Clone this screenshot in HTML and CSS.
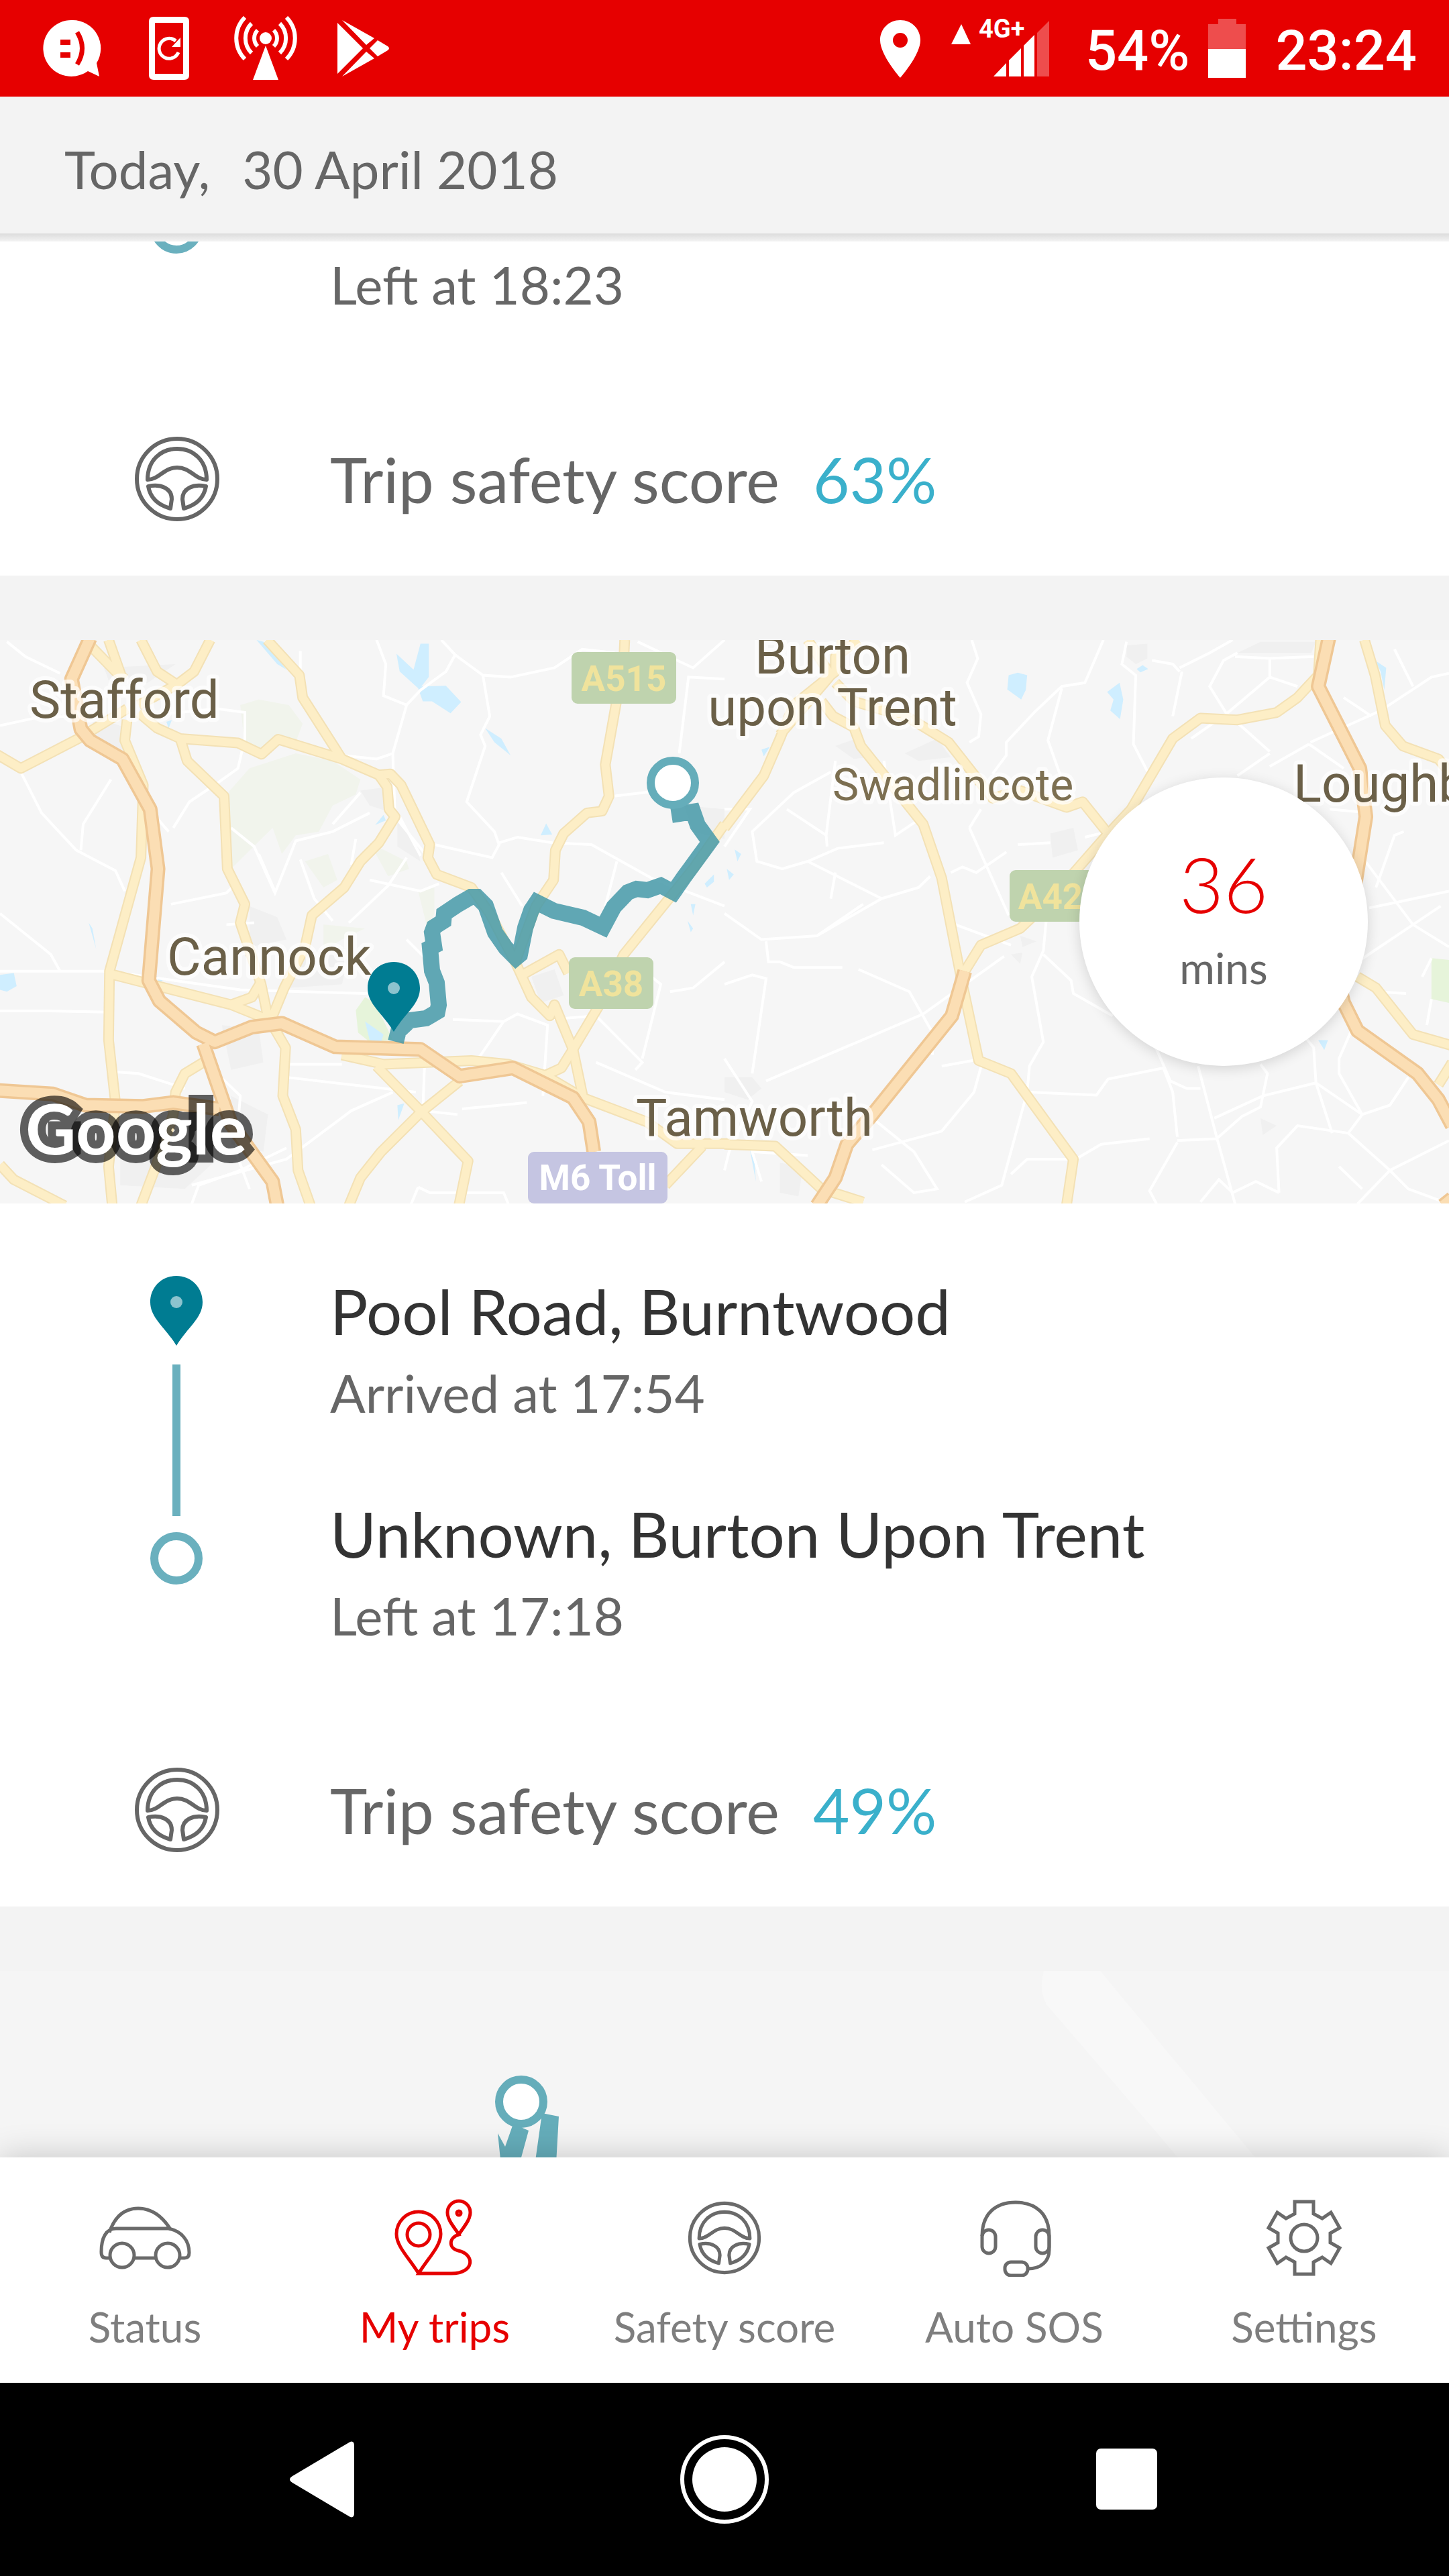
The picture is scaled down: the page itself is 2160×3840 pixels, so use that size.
FILE: index.html
```html
<!DOCTYPE html>
<html lang="en">

<head>
    <meta charset="UTF-8">
    <meta name="viewport" content="width=device-width, initial-scale=1.0">
    <title>My trips</title>
    <link rel="stylesheet" href="styles.css">
</head>

<body>
    <!-- shared icons -->
    <svg class="sprite" aria-hidden="true">
        <symbol id="wheel" viewBox="0 0 128 128">
            <g fill="none" stroke="currentColor" stroke-width="6" stroke-linejoin="round">
                <circle cx="64" cy="64" r="60" />
                <path d="M20 65C20 36 40 19 64 19S108 36 108 65C91 65 84 47 64 47S37 65 20 65Z" />
                <path d="M21 75C40 71 56 78 56 94L54 108C36 103 24 92 21 75Z" />
                <path d="M107 75C88 71 72 78 72 94L74 108C92 103 104 92 107 75Z" />
            </g>
        </symbol>
        <symbol id="pin" viewBox="0 0 78 104">
            <path fill="#007c92" d="M39 0C17 0 0 17 0 39C0 63 22 76 39 104C56 76 78 63 78 39C78 17 61 0 39 0Z" />
            <circle fill="#8cc3ce" cx="39" cy="39" r="9" />
        </symbol>
    </svg>

    <div class="status-bar">
        <div class="status-left">
            <svg class="status-icon" viewBox="0 0 96 96">
                <path fill="#fff" d="M48 6a42 42 0 1 0 23 76l17 8l-4-20A42 42 0 0 0 48 6Z" />
                <path fill="#e60000" d="M30 35h15v8H30zM30 54h15v8H30z" />
                <path fill="none" stroke="#e60000" stroke-width="7" d="M55 24Q70 48 55 72" />
            </svg>
            <svg class="status-icon" viewBox="0 0 96 96">
                <path fill="#fff" fill-rule="evenodd" d="M25 1H71Q78 1 78 8V88Q78 95 71 95H25Q18 95 18 88V8Q18 1 25 1ZM27 10V86H69V10Z" />
                <path fill="none" stroke="#fff" stroke-width="5" d="M62 54A15 15 0 1 1 58 37" />
                <path fill="#fff" d="M65 32V46H52Z" />
            </svg>
            <svg class="status-icon" viewBox="0 0 96 96">
                <g fill="none" stroke="#fff" stroke-width="6">
                    <path d="M17 2A44 44 0 0 0 17 64M79 2A44 44 0 0 1 79 64" />
                    <path d="M27 11A31 31 0 0 0 27 55M69 11A31 31 0 0 1 69 55" />
                    <path d="M36 21A17 17 0 0 0 36 45M60 21A17 17 0 0 1 60 45" />
                </g>
                <circle fill="#fff" cx="48" cy="33" r="9" />
                <path fill="#fff" d="M48 44L67 95H29Z" />
            </svg>
            <svg class="status-icon" viewBox="0 0 96 96">
                <path fill="#fff" d="M11 10L49 48L11 86ZM18 6L66 33L54 43ZM18 90L66 63L54 53ZM59 48L71 36L86 45Q90 48 86 51L71 60Z" />
            </svg>
        </div>
        <div class="status-right">
            <svg class="status-place" viewBox="0 0 60 96">
                <path fill="#fff" fill-rule="evenodd" d="M30 6C13 6 0 19 0 36C0 58 30 92 30 92S60 58 60 36C60 19 47 6 30 6ZM30 25A11 11 0 1 1 30 47A11 11 0 1 1 30 25Z" />
            </svg>
            <svg class="status-signal" viewBox="0 0 150 96">
                <path fill="#fff" d="M17 12L31 42H2Z" />
                <text class="network" x="43" y="32">4G+</text>
                <path fill="#fff" d="M65 90L84 70V90ZM88 90V66L106 48V90ZM110 90V44L126 28V90Z" />
                <path fill="#ee4d4d" d="M130 90V25L148 7V90Z" />
            </svg>
            <div class="battery">
                <span class="status-text">54%</span>
                <svg class="battery-icon" viewBox="0 0 56 96">
                    <path fill="#ee4d4d" d="M0 49V12H15V4H42V12H56V49Z" />
                    <path fill="#fff" d="M0 49H56V92H0Z" />
                </svg>
            </div>
            <span class="status-text">23:24</span>
        </div>
    </div>

    <header class="date-header">
        <span>Today,</span>
        <span>30 April 2018</span>
    </header>

    <main class="feed">
        <section class="trip trip-first">
            <div class="journey">
                <div class="timeline">
                    <span class="ring"></span>
                </div>
                <div class="stops">
                    <p class="time">Left at 18:23</p>
                </div>
            </div>
            <div class="score">
                <svg class="score-icon"><use href="#wheel" /></svg>
                <p class="score-text">Trip safety score <span class="percent">63%</span></p>
            </div>
        </section>

        <section class="trip">
            <div class="map">
                <svg class="map-art" viewBox="0 0 2160 840" preserveAspectRatio="xMidYMid slice">
                    <defs>
                        <g id="a-roads">
                            <!-- west half -->
                            <g transform="matrix(.6888 0 0 .5549 0 -14)">
                                <path d="M-10 330L45 370L170 290L275 210M195 40L250 110L270 130M235 25L262 120M305 25L340 110L383 145L420 110L455 25M383 145L300 200M578 25L648 120L655 180L740 345" />
                                <path d="M300 220L340 262L390 290L515 302L566 332L602 292L740 345L820 388L845 385L868 415L930 575L926 610L945 655L1020 690L1060 760L1115 890L1150 985L1190 1035L1200 1005L1240 1125L1262 1255L1400 1320L1465 1378L1580 1378" />
                                <path d="M275 240L270 295L310 415L305 610L237 915L235 1100L250 1270L235 1440L243 1545M390 290L405 350L485 445L492 640L530 735L520 785L565 950L580 1040" />
                                <path d="M820 388L838 420L842 480L855 500L820 570L780 620L745 690L675 765L660 850L615 960L585 1050L618 1120L612 1250L640 1340L645 1450L672 1545M237 922L500 1005L580 1045M500 1005L545 985L562 950" />
                                <path d="M1352 25L1350 80L1310 360L1318 445L1303 485L1270 490L1220 545L1202 590L1198 670L1160 740L1115 890M1568 520L1500 640L1350 870L1300 1000L1240 1125L1215 1175L1180 1195L1100 1165L1020 1155L830 1165L740 1140M1130 925L1210 870L1230 920M1180 1195L1262 1255" />
                                <path d="M815 1170L910 1290L1013 1425L993 1545M995 1210L910 1295L825 1400L780 1470L755 1545M440 1160L400 1190L380 1240L375 1300L340 1430L305 1545M0 1435L30 1475L140 1545M1520 1385L1440 1490" />
                            </g>
                            <!-- east half -->
                            <g transform="matrix(.6888 0 0 .5549 1080 -14)">
                                <path d="M255 25L240 110L150 200L120 290L85 390L0 530M180 25L230 120L120 280M290 25L240 70L240 110M210 190L235 230L280 260L295 310L430 520L470 665L510 920L550 1155L620 1190L755 1420L740 1545" />
                                <path d="M240 140L280 190L400 235L485 300L580 450L640 430L740 475L775 460L830 545" />
                                <path d="M1290 25L1285 120L1240 180L1195 220L1110 240L1030 235L970 290L880 480L820 560L700 730L640 800L555 845L520 915" />
                                <path d="M1385 25L1408 120L1430 255L1468 310L1545 345L1575 390M1370 930L1410 960L1490 1085L1575 1115M1575 1160L1545 1220M0 1380L110 1385L210 1500L300 1535" />
                            </g>
                        </g>
                        <g id="motorways">
                            <path transform="matrix(.6888 0 0 .5549 0 -14)" d="M195 20L155 130L175 265L195 295L265 345L325 480L342 640L322 940L345 995L425 1080L465 1105L545 1065L610 1055L725 1118L910 1125L995 1197L1110 1175L1240 1255L1275 1320L1285 1400M-10 1235L115 1245L185 1275L310 1278L375 1268L475 1285M440 1110L500 1325L590 1480L600 1545" />
                            <path transform="matrix(.6888 0 0 .5549 1080 -14)" d="M520 915L492 1035L320 1300L265 1380L240 1470L200 1545M1308 20L1285 150L1375 370L1388 500L1365 680L1310 850L1340 1000L1370 1075L1500 1190L1545 1260L1575 1330M1555 1545L1575 1525" />
                        </g>
                    </defs>

                    <rect width="2160" height="840" fill="#f6f6f6" />

                    <!-- woods, parks, towns and water -->
                    <g transform="matrix(.6888 0 0 .5549 0 -14)">
                        <path fill="#f1f4ec" d="M520 200L560 185L625 200L655 250L640 300L600 285L566 340L530 310ZM540 370L640 330L720 350L780 400L770 440L720 470L690 540L640 550L610 600L590 530L500 640L490 440ZM660 620L710 600L730 670L700 690ZM800 570L880 620L885 640L840 660ZM700 790L790 800L740 830L700 860ZM905 700L940 690L940 760L925 800Z" />
                        <path fill="#f0f0f0" d="M200 230L270 260L265 330L200 290ZM225 100L380 90L320 140L240 150ZM540 740L600 770L620 830L540 850ZM630 870L760 850L740 950L620 960ZM480 1060L560 1070L570 1160L500 1180ZM260 1380L420 1330L470 1420L400 1500L260 1490ZM500 1250L580 1300L570 1400L500 1380ZM780 430L840 420L850 490L800 470ZM860 510L900 570L910 620L860 580ZM1150 930L1200 910L1220 980L1170 1000ZM1480 470L1568 480L1568 560L1500 540Z" />
                        <path fill="#e6f4da" d="M790 985L812 1000L850 1100L800 1105L775 1080L770 1020Z" />
                        <path fill="#cfeeff" d="M858 62L895 105L910 35L928 35L928 125L912 150L965 148L998 192L975 222L935 190L915 190L905 155L865 110ZM1050 262L1085 290L1105 335L1070 300ZM1182 518L1195 548L1170 550ZM830 495L835 510L812 522ZM0 925L30 920L36 955L15 970L0 965ZM192 785L200 800L208 855ZM790 1050L830 1085L825 1105L800 1100ZM555 25L570 30L620 105L600 90ZM360 245L372 240L365 262ZM335 925L352 940L345 945ZM860 1275L875 1270L862 1315ZM1495 735L1505 735L1500 765ZM1488 780L1500 800L1495 810ZM1525 680L1545 655L1545 675L1530 690Z" />
                    </g>
                    <g transform="matrix(.6888 0 0 .5549 1080 -14)">
                        <path fill="#f0f0f0" d="M870 40L915 35L915 75L890 90L870 70ZM240 310L285 290L310 340L280 345ZM390 330L460 290L490 340L420 350ZM705 545L755 530L765 590L710 610ZM1110 60L1160 30L1280 30L1270 60ZM0 1200L60 1200L80 1230L50 1260L0 1240ZM120 1430L170 1440L160 1520L120 1510ZM1160 1310L1195 1330L1165 1355ZM640 820L675 835L645 850ZM620 870L645 865L640 895Z" />
                        <path fill="#e6f4da" d="M1530 880L1568 885V1000L1530 990Z" />
                        <path fill="#cfeeff" d="M615 120L635 113L655 120L652 160L642 185L612 158ZM828 165L855 140L863 185L856 238L835 215L842 185ZM892 103L905 93L917 103L900 112ZM1408 80L1432 100L1428 160L1420 110ZM80 320L98 312L85 338ZM22 588L36 600L28 620ZM5 640L20 655L10 670ZM1285 1100L1306 1100L1298 1127ZM55 1395L65 1430L68 1480Z" />
                    </g>

                    <g class="lanes">
                        <g transform="matrix(.6888 0 0 .5549 0 -14)">
                            <path d="M15 30L55 70L130 115M0 255L75 235L150 230M45 380L90 490L165 590L250 645L270 700M175 590L180 520L240 400M330 490L365 540M300 230L470 210L530 220V290L515 370L470 410L410 460L375 530" />
                            <path d="M0 915H235L520 965L790 975L860 960M0 1022H105L235 1025M0 760L110 870L130 915M370 735L490 705L510 680M500 530L550 580L595 705L640 565L720 540L800 490M595 700L560 600M650 615L680 720L720 780M720 520L780 435M770 560L760 630M880 610L840 685L755 785M800 670L910 700L950 680M490 790L550 785" />
                            <path d="M815 25L835 90L830 175L880 200L850 330L855 500L930 615M880 200L910 160L965 110L985 65L955 25M985 65L1045 120L1105 125L1200 100L1260 50L1330 60M1045 120L1060 230L1040 280L1050 310L1010 460L1070 540L1080 575L1065 610L940 575M1080 570L1120 555L1195 570L1280 575L1410 665L1568 740M1335 620L1310 740M1470 330L1490 125L1568 130M1568 25L1500 100L1380 30M1325 445L1430 430" />
                            <path d="M740 335L815 345L850 330M650 55V120M865 500L910 605M880 830L920 880M1085 650L1130 740M980 1045L1090 1050L1120 1030L1185 1060L1175 1250M1090 1050L1035 1150M1185 1045L1290 1035L1390 1160L1375 1180M1400 920L1430 950L1410 1050L1390 1150M1568 890L1500 960L1450 970M1290 1160L1440 1240L1568 1260M625 1165H740M620 1200L900 1240M240 1185L300 1190L400 1230M1000 1285L1140 1268M850 1240L760 1290L620 1420L415 1490M920 1130L915 1290L990 1300M415 1540L430 1490L520 1450L620 1390M470 1190L520 1250L510 1400L540 1500M905 1495L930 1510H1090L1100 1540M905 1495L890 1540" />
                        </g>
                        <g transform="matrix(.6888 0 0 .5549 1080 -14)">
                            <path d="M535 25L548 75L525 140L555 225L550 285L530 300M820 25L780 140L730 150L670 220L610 300V335L580 385M730 155L700 295L730 400M870 30L860 90L890 120L885 305L920 390M925 80L970 90L985 110M1110 60L1080 80L1050 150L1085 220L1180 325M1105 70L1180 75L1275 70M1180 75V125L1240 150M1180 125L1085 225L1010 290M985 100L1050 60L1100 25M990 110L970 230M1180 330L1110 390M1265 305L1340 370M1265 305L1180 365M1268 300L1420 215L1530 125L1568 115M1450 50L1490 150M1340 180L1400 230M1310 480L1400 490" />
                            <path d="M0 480H55L0 580M230 380L150 435L60 540L70 620L125 640L180 620L245 585L345 570M135 480L220 550L222 580M345 350L370 550L430 500M220 550L240 350M180 620L340 720L200 820L80 830L0 760M340 720L420 690L445 660M200 820L300 735M240 650L230 720M530 530L555 480M530 530L615 765M490 650L515 635L545 650L610 595M635 575L705 570M780 555L830 540M0 950L60 925L90 935L60 1190M90 835L95 890L120 890L150 905H255M290 910L400 970L450 1080V1140M90 1210L430 1030L605 875M500 790L620 845" />
                            <path d="M700 730L690 860L665 930L690 1105L660 1170L655 1240L600 1490L520 1535M660 1240L805 1248L830 1205L950 1175L970 1240L980 1360M690 870L750 940L755 975L840 1035M470 1170L560 1150L540 1240L470 1345L320 1395M320 1310L410 1400L460 1500L410 1510L340 1435M930 1110L965 1210L1000 1230H1030M1025 1170L1065 1360L1105 1540M760 1420L815 1380L920 1365M620 1460L655 1420H750M980 1375L920 1505L935 1540M980 1370L1065 1365L1120 1305L1160 1280L1165 1250L1280 1215L1380 1300L1350 1350L1440 1450L1568 1370M1160 1165L1175 1190L1165 1250L1060 1310M1280 1215L1275 1120L1255 1090M1280 1215L1315 1350M1365 1050L1330 1150V1190L1380 1300L1440 1275L1480 1200M1350 1350L1240 1330L1195 1390L1200 1510M1440 1450L1370 1540M1200 1510L1150 1480L1100 1510L1070 1475L1030 1535M1440 1450L1480 1500L1568 1540M1380 1500L1330 1440" />
                            <path d="M1395 745L1455 730L1568 700M1375 600L1490 790L1568 850M1370 890L1490 790M1490 790L1550 740M1410 690L1450 550L1470 540M1410 970L1475 975M1530 990L1520 1060M1510 930L1530 880M0 1150L60 1265L10 1400L0 1450M80 1480L60 1400L180 1410" />
                        </g>
                    </g>

                    <use class="a-road-edge" href="#a-roads" />
                    <use class="a-road" href="#a-roads" />
                    <use class="motorway-edge" href="#motorways" />
                    <use class="motorway" href="#motorways" />

                    <g class="shield">
                        <rect x="852" y="18" width="156" height="77" rx="9" />
                        <rect x="848" y="473" width="126" height="77" rx="9" />
                        <rect x="1505" y="343" width="126" height="77" rx="9" />
                        <rect class="toll" x="787" y="763" width="208" height="77" rx="9" />
                        <text x="930" y="76">A515</text>
                        <text x="911" y="531">A38</text>
                        <text x="1566" y="401">A42</text>
                        <text class="toll-text" x="891" y="820">M6 Toll</text>
                    </g>

                    <path class="route" d="M590 599L594 583L611 567L635 564L652 554L654 544L651 511L644 493L641 459L647 456L644 436L647 428L661 419L662 408L683 394L702 383H711L724 396L738 436L754 459L769 474L775 469L783 429L792 403L800 391L826 404L869 414L899 428L915 398L936 376L949 371L965 373L985 366L1004 376L1020 353L1058 301L1040 276L1033 256L1001 261" />

                    <g class="town">
                        <text x="44" y="116">Stafford</text>
                        <text x="249" y="499">Cannock</text>
                        <text x="948" y="739">Tamworth</text>
                        <text x="1241" y="50" text-anchor="middle">Burton</text>
                        <text x="1241" y="127" text-anchor="middle">upon Trent</text>
                        <text x="1928" y="241">Loughb</text>
                        <text class="town-small" x="1241" y="239">Swadlincote</text>
                    </g>

                    <circle class="route-start" cx="1003" cy="213" r="33" />
                    <use href="#pin" x="548" y="480" width="78" height="104" />
                    <text class="google" x="38" y="767">Google</text>
                </svg>
                <div class="duration">
                    <span class="duration-value">36</span>
                    <span class="duration-unit">mins</span>
                </div>
            </div>

            <div class="journey">
                <div class="timeline">
                    <svg class="pin-icon"><use href="#pin" /></svg>
                    <span class="line"></span>
                    <span class="ring"></span>
                </div>
                <div class="stops">
                    <div>
                        <h2 class="place">Pool Road, Burntwood</h2>
                        <p class="time">Arrived at 17:54</p>
                    </div>
                    <div>
                        <h2 class="place">Unknown, Burton Upon Trent</h2>
                        <p class="time">Left at 17:18</p>
                    </div>
                </div>
            </div>
            <div class="score">
                <svg class="score-icon"><use href="#wheel" /></svg>
                <p class="score-text">Trip safety score <span class="percent">49%</span></p>
            </div>
        </section>

        <section class="trip">
            <div class="map">
                <svg class="map-art" viewBox="0 0 2160 840" preserveAspectRatio="xMidYMid slice">
                    <rect width="2160" height="840" fill="#f5f5f5" />
                    <path fill="#f8f8f8" d="M1556 0Q1548 28 1560 50L1756 278L2240 840H2350L1871 278L1640 0Z" />
                    <path fill="#65adba" d="M742 242L753 262L765 228L788 238L760 340H752ZM808 212L833 217L826 340H790Z" />
                    <circle class="route-start" cx="777" cy="195" r="33" />
                </svg>
            </div>
        </section>
    </main>

    <nav class="tabs">
        <a class="tab" href="#status">
            <svg class="tab-icon" viewBox="0 0 144 116">
                <path d="M20 88H14Q7 88 7 79C7 58 14 44 29 44H107C127 48 138 62 138 80Q138 88 131 88H125M57 88H88M19 50C27 26 42 14 62 14S98 26 110 45" />
                <circle cx="38" cy="84" r="18" />
                <circle cx="106" cy="84" r="18" />
            </svg>
            Status
        </a>
        <a class="tab active" href="#trips">
            <svg class="tab-icon" viewBox="0 0 144 116">
                <path d="M48 111C34 88 15 71 15 52A33 33 0 0 1 81 52C81 71 62 88 48 111H97C132 111 132 82 107 77C93 74 92 58 108 53C102 43 91 32 91 20A17 17 0 0 1 125 20C125 32 114 43 108 53" />
                <circle cx="48" cy="53" r="17" />
                <circle cx="108" cy="21" r="3" />
            </svg>
            My trips
        </a>
        <a class="tab" href="#safety">
            <svg class="tab-icon" viewBox="0 0 144 116"><use href="#wheel" x="17" y="3" width="110" height="110" /></svg>
            Safety score
        </a>
        <a class="tab" href="#sos">
            <svg class="tab-icon" viewBox="0 0 144 116">
                <path d="M24 55C24 22 44 5 74 5S124 22 124 55V76C124 93 112 104 92 104" />
                <rect x="24" y="46" width="20" height="35" rx="10" />
                <rect x="104" y="46" width="20" height="35" rx="10" />
                <rect x="58" y="94" width="34" height="20" rx="9" />
            </svg>
            Auto SOS
        </a>
        <a class="tab" href="#settings">
            <svg class="tab-icon" viewBox="0 0 144 116">
                <path d="M58 4H86V22L99 29L112 20L125 43L111 51V65L125 73L112 96L99 87L86 94V112H58V94L45 87L32 96L19 73L33 65V51L19 43L32 20L45 29L58 22Z" />
                <circle cx="72" cy="58" r="20" />
            </svg>
            Settings
        </a>
    </nav>

    <div class="system-bar">
        <button class="system-button" aria-label="Back">
            <svg width="132" height="132" viewBox="0 0 132 132">
                <path fill="#fff" d="M108 10Q114 8 114 16V116Q114 124 108 122L22 71Q14 66 22 61Z" />
            </svg>
        </button>
        <button class="system-button" aria-label="Home">
            <svg width="132" height="132" viewBox="0 0 132 132">
                <circle cx="66" cy="66" r="63" fill="none" stroke="#fff" stroke-width="6" />
                <circle cx="66" cy="66" r="48" fill="#fff" />
            </svg>
        </button>
        <button class="system-button" aria-label="Recent apps">
            <svg width="132" height="132" viewBox="0 0 132 132">
                <rect x="20" y="20" width="91" height="91" rx="7" fill="#fff" />
            </svg>
        </button>
    </div>
</body>

</html>
```
FILE: styles.css
```css
* {
    box-sizing: border-box;
}

body {
    margin: 0;
    height: 100vh;
    display: flex;
    flex-direction: column;
    background: #f3f3f3;
    color: #666;
    font-family: Lato, "Open Sans", sans-serif;
}

p,
h2 {
    margin: 0;
    font-weight: 400;
}

svg {
    display: block;
    flex: none;
}

.sprite {
    position: absolute;
    width: 0;
    height: 0;
}

/* status bar */
.status-bar {
    flex: none;
    display: flex;
    justify-content: space-between;
    align-items: center;
    height: 144px;
    padding: 0 48px 0 60px;
    background: #e60000;
    color: #fff;
    font-family: Roboto, sans-serif;
}

.status-left {
    display: flex;
    gap: 48px;
}

.status-icon {
    width: 96px;
    height: 96px;
}

.status-right {
    display: flex;
    align-items: center;
    gap: 44px;
}

.status-place {
    width: 60px;
    height: 96px;
}

.status-signal {
    width: 150px;
    height: 96px;
    margin-right: 8px;
    overflow: visible;
}

.network {
    fill: #fff;
    font-size: 38px;
    font-weight: 700;
}

.battery {
    display: flex;
    align-items: center;
    gap: 28px;
}

.battery-icon {
    width: 56px;
    height: 96px;
}

.status-text {
    padding-top: 8px;
    font-size: 83px;
    font-weight: 500;
    line-height: 96px;
}

/* date */
.date-header {
    flex: none;
    display: flex;
    gap: 48px;
    padding: 52px 96px 52px;
    background: linear-gradient(#dcdcdc, #f3f3f3) bottom / 100% 12px no-repeat #f3f3f3;
    font-size: 78px;
    line-height: 112px;
}

/* trips */
.feed {
    flex: 1;
    min-height: 0;
    overflow: hidden;
    display: flex;
    flex-direction: column;
    gap: 96px;
}

.trip {
    flex: none;
    background: #fff;
}

.journey {
    display: grid;
    grid-template-columns: 492px 1fr;
    padding-top: 94px;
}

.timeline {
    display: flex;
    flex-direction: column;
    align-items: center;
    width: 78px;
    margin: 14px 0 0 224px;
}

.trip-first .journey {
    height: 120px;
    padding-top: 8px;
}

/* the first trip is scrolled half under the date */
.trip-first .timeline {
    margin-top: -68px;
}

.pin-icon {
    width: 78px;
    height: 104px;
}

.line {
    width: 12px;
    height: 226px;
    margin: 28px 0 24px;
    background: #6ab0be;
}

.ring {
    width: 78px;
    height: 78px;
    border: 12px solid #6ab0be;
    border-radius: 50%;
}

.stops {
    display: flex;
    flex-direction: column;
    gap: 88px;
}

.place {
    color: #333;
    font-size: 94px;
    line-height: 132px;
}

.time {
    font-size: 78px;
    line-height: 112px;
}

.score {
    display: grid;
    grid-template-columns: 292px 1fr;
    align-items: center;
    padding: 168px 0 78px 200px;
}

.score-icon {
    width: 128px;
    height: 128px;
}

.score-text {
    font-size: 94px;
    line-height: 132px;
}

.percent {
    margin-left: 26px;
    color: #3ab0cb;
}

/* map */
.map {
    position: relative;
}

.map-art {
    width: 100%;
    height: 840px;
}

.map-art path {
    vector-effect: non-scaling-stroke;
}

.lanes {
    fill: none;
    stroke: #fff;
    stroke-width: 4px;
}

.a-road-edge,
.a-road,
.motorway-edge,
.motorway,
.route {
    fill: none;
    stroke-linejoin: round;
}

.a-road-edge {
    stroke: #f3e1b5;
    stroke-width: 16px;
}

.a-road {
    stroke: #fdeec6;
    stroke-width: 12px;
}

.motorway-edge {
    stroke: #efc794;
    stroke-width: 22px;
}

.motorway {
    stroke: #fbdeb4;
    stroke-width: 15px;
}

.route {
    stroke: #4599a8;
    stroke-opacity: .85;
    stroke-width: 24px;
    stroke-linejoin: miter;
}

.route-start {
    fill: #fff;
    stroke: #65adba;
    stroke-width: 12px;
}

.shield {
    fill: #bfd3ae;
    font-family: Roboto, sans-serif;
    font-size: 53px;
    font-weight: 700;
    text-anchor: middle;
}

.shield text {
    fill: #f0e39c;
}

.shield .toll {
    fill: #c5c5e2;
}

.shield .toll-text {
    fill: #fff;
}

.town {
    fill: #6b6048;
    stroke: rgba(255, 255, 255, .7);
    stroke-width: 12px;
    stroke-linejoin: round;
    paint-order: stroke;
    font-family: Roboto, sans-serif;
    font-size: 78px;
}

.town-small {
    fill: #7c6f51;
    font-size: 66px;
}

.google {
    fill: #fff;
    stroke: rgba(0, 0, 0, .62);
    stroke-width: 24px;
    paint-order: stroke;
    font-size: 104px;
    font-weight: 700;
}

.duration {
    position: absolute;
    top: 205px;
    right: 121px;
    display: flex;
    flex-direction: column;
    align-items: center;
    gap: 20px;
    width: 430px;
    height: 430px;
    padding-top: 92px;
    border-radius: 50%;
    background: #fff;
    box-shadow: 0 4px 20px rgba(0, 0, 0, .14);
}

.duration-value {
    color: #e60000;
    font-size: 114px;
    font-weight: 300;
    line-height: 132px;
}

.duration-unit {
    font-size: 64px;
    line-height: 80px;
}

/* bottom tabs */
.tabs {
    flex: none;
    position: relative;
    display: grid;
    grid-template-columns: repeat(5, 1fr);
    padding: 62px 0 44px;
    background: #fff;
    box-shadow: 0 0 48px rgba(0, 0, 0, .2);
}

.tab {
    display: flex;
    flex-direction: column;
    align-items: center;
    gap: 34px;
    color: #7e7e7e;
    font-size: 62px;
    line-height: 80px;
    text-decoration: none;
}

.tab.active {
    color: #e60000;
}

.tab-icon {
    width: 144px;
    height: 116px;
    fill: none;
    stroke: currentColor;
    stroke-width: 5px;
    color: #6a6a6a;
}

.active .tab-icon {
    color: #e60000;
}

/* android buttons */
.system-bar {
    flex: none;
    position: relative;
    display: grid;
    grid-template-columns: repeat(3, 1fr);
    height: 288px;
    padding: 0 180px;
    background: #000;
}

.system-button {
    display: flex;
    justify-content: center;
    align-items: center;
    padding: 0;
    border: 0;
    background: none;
}
```
